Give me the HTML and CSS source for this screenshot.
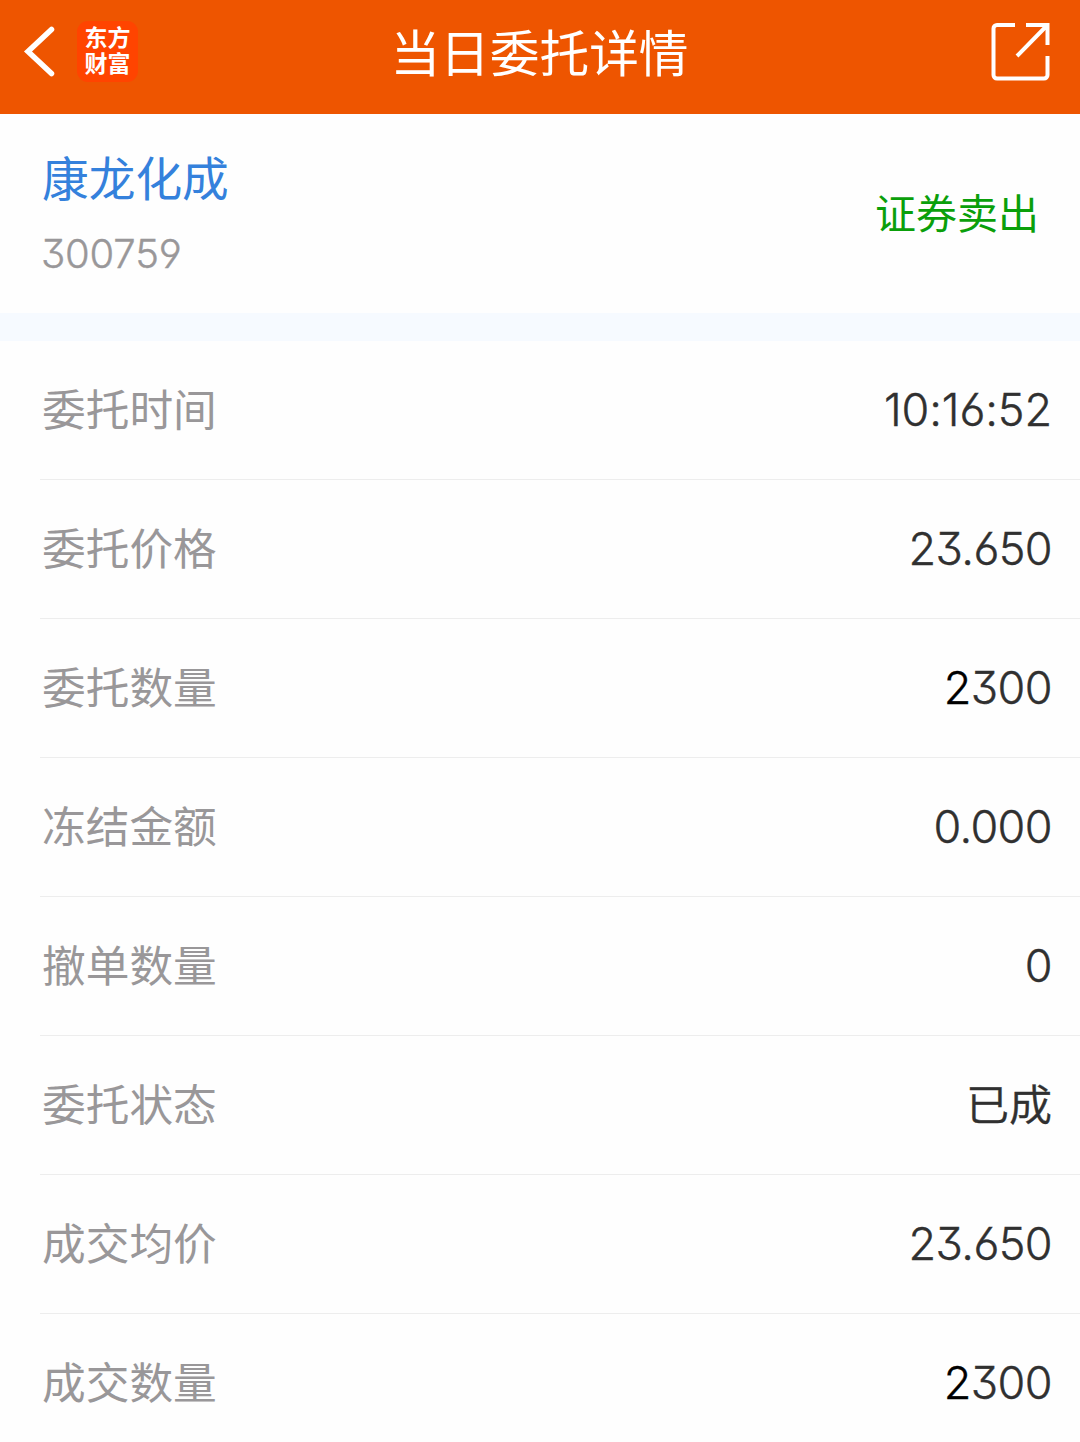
FILE: index.html
```
<!DOCTYPE html>
<html lang="zh-CN">

<head>
  <meta charset="UTF-8">
  <title>当日委托详情</title>
  <link rel="stylesheet" href="styles.css">
</head>

<body>
  <header class="header">
    <div class="header-left">
      <svg class="back-icon" width="32" height="52" viewBox="0 0 32 52">
        <path d="M28.500 3.500L5 25.500l23.500 22" fill="none" stroke="#fff" stroke-width="5.500" stroke-linecap="round" />
      </svg>
      <div class="logo">东方<br>财富</div>
    </div>
    <h1 class="title">当日委托详情</h1>
    <svg class="share-icon" width="60" height="60" viewBox="0 0 60 60" fill="none" stroke="#fff" stroke-width="4">
      <path d="M24 3H6a3.500 3.500 0 0 0-3.500 3.500V53A3.500 3.500 0 0 0 6 56.500h47a3.500 3.500 0 0 0 3.500-3.500V34" />
      <path d="M35 3h21.500v20M56 3.500L26 34" />
    </svg>
  </header>

  <section class="stock">
    <div class="stock-info">
      <div class="stock-name">康龙化成</div>
      <div class="stock-code">300759</div>
    </div>
    <div class="trade-type">证券卖出</div>
  </section>

  <ul class="detail-list">
    <li><span class="label">委托时间</span><span class="value time">10:16:52</span></li>
    <li><span class="label">委托价格</span><span class="value">23.650</span></li>
    <li><span class="label">委托数量</span><span class="value"><span class="lead">2</span>300</span></li>
    <li><span class="label">冻结金额</span><span class="value">0.000</span></li>
    <li><span class="label">撤单数量</span><span class="value">0</span></li>
    <li><span class="label">委托状态</span><span class="value status">已成</span></li>
    <li><span class="label">成交均价</span><span class="value">23.650</span></li>
    <li><span class="label">成交数量</span><span class="value"><span class="lead">2</span>300</span></li>
  </ul>
</body>

</html>
```
FILE: styles.css
```
body {
  margin: 0;
  height: 1442px;
  overflow: hidden;
  font-family: "Noto Sans CJK SC", sans-serif;
  background-color: #fefefe;
}

.header {
  display: grid;
  grid-template-columns: 1fr auto 1fr;
  align-items: center;
  height: 114px;
  padding: 0 29px 11px 23px;
  box-sizing: border-box;
  background-color: #ee5500;
  color: #fff;
}

.header-left {
  display: flex;
  align-items: center;
  gap: 22px;
}

.logo {
  width: 61px;
  height: 61px;
  padding-top: 2px;
  box-sizing: border-box;
  border-radius: 11px;
  background-color: #ff4400;
  font-size: 23px;
  font-weight: 700;
  line-height: 26px;
  text-align: center;
}

.title {
  margin: 0;
  padding: 0 0 3px 5px;
  font-size: 49.700px;
  font-weight: 400;
  line-height: 60px;
}

.share-icon {
  justify-self: end;
}

.stock {
  display: flex;
  align-items: center;
  justify-content: space-between;
  height: 199px;
  padding: 0 41px 0 42px;
  box-sizing: border-box;
}

.stock-name {
  padding-top: 3px;
  font-size: 46.700px;
  line-height: 70px;
  color: #3481dc;
}

.stock-code {
  margin-top: 8px;
  margin-left: -1px;
  font-family: Inter, sans-serif;
  font-feature-settings: "cv03", "cv04", "cv09";
  font-size: 40px;
  font-weight: 300;
  letter-spacing: -0.200px;
  line-height: 70px;
  color: #999799;
  -webkit-text-stroke: 0.400px #999799;
}

.trade-type {
  padding-bottom: 6px;
  font-size: 41px;
  line-height: 60px;
  color: #0a9f0a;
}

.detail-list {
  margin: 0;
  padding: 0;
  list-style-type: none;
  border-top: 28px solid #f6faff;
}

.detail-list li {
  display: flex;
  align-items: center;
  justify-content: space-between;
  height: 139px;
  margin-left: 40px;
  padding: 0 28px 0 2px;
  box-sizing: border-box;
  border-bottom: 1px solid #ededed;
}

.label {
  padding-bottom: 7px;
  font-size: 43.700px;
  color: #999799;
}

.value {
  padding-bottom: 1px;
  font-family: Inter, sans-serif;
  font-feature-settings: "cv03", "cv04", "cv09";
  font-size: 45px;
  font-weight: 300;
  letter-spacing: -0.600px;
  color: #303030;
  -webkit-text-stroke: 0.400px;
}

.time {
  letter-spacing: -0.100px;
}

.status {
  padding-bottom: 7px;
  font-family: "Noto Sans CJK SC", sans-serif;
  font-size: 43px;
  font-weight: 350;
  letter-spacing: 0;
}

.lead {
  color: #000;
}
```
